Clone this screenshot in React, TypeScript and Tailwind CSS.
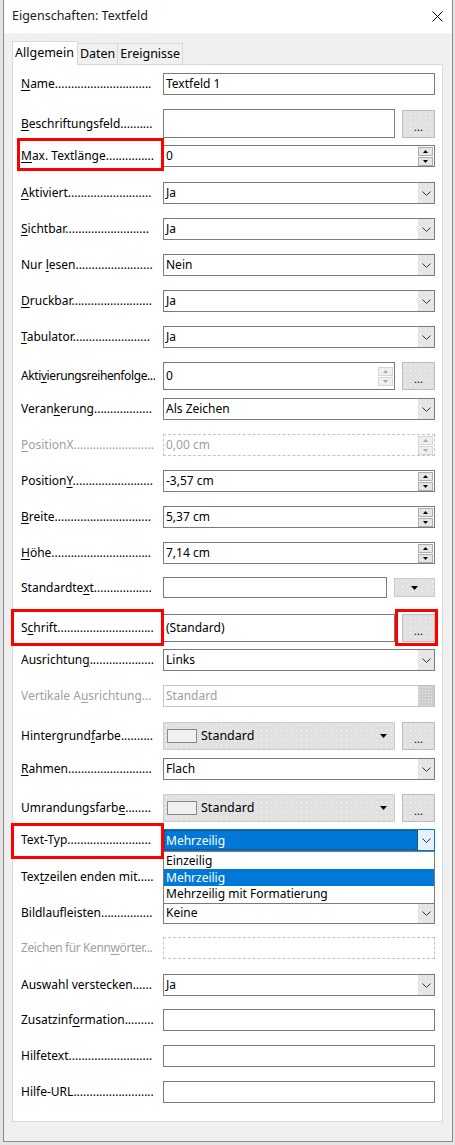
import React from "react";

type Kind =
    | "text"
    | "textBtn"
    | "spin"
    | "spinBtn"
    | "select"
    | "selectOff"
    | "spinOff"
    | "textDrop"
    | "font"
    | "color"
    | "focus"
    | "textOff";

type Row = {
    label: string;
    kind: Kind;
    value?: string;
    mt: string;
    off?: boolean;
    mark?: "max" | "schrift" | "typ";
};

const rows: Row[] = [
    { label: "_Name", kind: "text", value: "Textfeld 1", mt: "mt-0" },
    { label: "_Beschriftungsfeld", kind: "textBtn", mt: "mt-[14px]" },
    { label: "_Max. Textlänge", kind: "spin", value: "0", mt: "mt-[7px]", mark: "max" },
    { label: "_Aktiviert", kind: "select", value: "Ja", mt: "mt-[15px]" },
    { label: "_Sichtbar", kind: "select", value: "Ja", mt: "mt-[14px]" },
    { label: "Nur _lesen", kind: "select", value: "Nein", mt: "mt-[14px]" },
    { label: "_Druckbar", kind: "select", value: "Ja", mt: "mt-[14px]" },
    { label: "_Tabulator", kind: "select", value: "Ja", mt: "mt-[14px]" },
    { label: "Akti_vierungsreihenfolge", kind: "spinBtn", value: "0", mt: "mt-[14px]" },
    { label: "Veran_kerung", kind: "select", value: "Als Zeichen", mt: "mt-[8px]" },
    { label: "_PositionX", kind: "spinOff", value: "0,00 cm", mt: "mt-[14px]", off: true },
    { label: "Position_Y", kind: "spin", value: "-3,57 cm", mt: "mt-[14px]" },
    { label: "_Breite", kind: "spin", value: "5,37 cm", mt: "mt-[14px]" },
    { label: "_Höhe", kind: "spin", value: "7,14 cm", mt: "mt-[14px]" },
    { label: "Standardte_xt", kind: "textDrop", mt: "mt-[13px]" },
    { label: "S_chrift", kind: "font", value: "(Standard)", mt: "mt-[16px]", mark: "schrift" },
    { label: "Ausrichtun_g", kind: "select", value: "Links", mt: "mt-[7px]" },
    { label: "Vertikale A_usrichtung", kind: "selectOff", value: "Standard", mt: "mt-[14px]", off: true },
    { label: "Hintergrund_farbe", kind: "color", mt: "mt-[15px]" },
    { label: "_Rahmen", kind: "select", value: "Flach", mt: "mt-[8px]" },
    { label: "Umrandungsfarb_e", kind: "color", mt: "mt-[14px]" },
    { label: "Text-Typ", kind: "focus", value: "Mehrzeilig", mt: "mt-[7px]", mark: "typ" },
    { label: "Tex_tzeilen enden mit", kind: "select", value: "", mt: "mt-[15px]" },
    { label: "Bildlaufleisten", kind: "select", value: "Keine", mt: "mt-[14px]" },
    { label: "Zeichen für Kenn_wörter", kind: "textOff", mt: "mt-[13px]", off: true },
    { label: "Auswahl verstecken", kind: "select", value: "Ja", mt: "mt-[15px]" },
    { label: "Zusatzinf_ormation", kind: "text", mt: "mt-[13px]" },
    { label: "Hilfetext", kind: "text", mt: "mt-[14px]" },
    { label: "Hilfe-URL", kind: "text", mt: "mt-[14px]" },
];

// leader dots: how many fit after the label text in a 134px column
let ctx: CanvasRenderingContext2D | null = null;
const measure = (text: string) => {
    if (!ctx) {
        ctx = document.createElement("canvas").getContext("2d");
        if (ctx) ctx.font = "12px 'Noto Sans'";
    }
    if (!ctx) return { dots: "...", tight: false };
    const w = ctx.measureText(text).width;
    const dot = ctx.measureText(".").width || 3;
    const free = 133 - w;
    return {
        dots: ".".repeat(Math.max(3, Math.floor(free / dot))),
        tight: free < dot * 3,
    };
};

const Label = ({ text, off }: { text: string; off?: boolean }) => {
    const i = text.indexOf("_");
    const { dots, tight } = measure(text.replace("_", ""));
    const color = off ? "text-[#a0a0a0]" : "text-black";
    return (
        <div className={`w-[142px] shrink-0 ${color}`}>
            <div
                className={`w-[134px] overflow-hidden whitespace-nowrap ${tight ? "tracking-[-0.4px]" : ""}`}
            >
                {i < 0 ? (
                    text
                ) : (
                    <>
                        {text.slice(0, i)}
                        <span className="underline underline-offset-2">{text[i + 1]}</span>
                        {text.slice(i + 2)}
                    </>
                )}
                {dots}
            </div>
        </div>
    );
};

const Chevron = ({ color = "#333" }: { color?: string }) => (
    <svg width="9" height="5" viewBox="0 0 9 5">
        <polyline points="0.5,0.5 4.5,4.5 8.5,0.5" fill="none" stroke={color} strokeWidth="1" />
    </svg>
);

const Down = ({ w = 7, color = "#000" }: { w?: number; color?: string }) => (
    <svg width={w} height={Math.ceil(w / 2)} viewBox={`0 0 ${w} ${Math.ceil(w / 2)}`}>
        <polygon points={`0,0 ${w},0 ${w / 2},${Math.ceil(w / 2)}`} fill={color} />
    </svg>
);

const Up = ({ color = "#000" }: { color?: string }) => (
    <svg width="5" height="3" viewBox="0 0 5 3">
        <polygon points="0,3 5,3 2.5,0" fill={color} />
    </svg>
);

const dotted =
    "bg-[#e1e1e1] bg-[radial-gradient(circle,#f8f8f8_0.7px,transparent_0.9px)] bg-[length:5px_5px]";

const DotsButton = () => (
    <div
        className={`ml-[7px] flex h-[28px] w-[33px] shrink-0 items-end justify-center border border-[#bcbcbc] pb-[5px] text-[11px] leading-none ${dotted}`}
    >
        ...
    </div>
);

const Spin = ({ off }: { off?: boolean }) => {
    const box = off
        ? "border-[#d6d6d6] bg-[#f0f0f0]"
        : "border-[#adadad] bg-[#e5e5e5]";
    const c = off ? "#a8a8a8" : "#000";
    return (
        <div className="mr-px flex w-[15px] shrink-0 flex-col gap-px">
            <div className={`flex h-[9px] items-center justify-center border ${box}`}>
                <Up color={c} />
            </div>
            <div className={`flex h-[9px] items-center justify-center border ${box}`}>
                <Down w={5} color={c} />
            </div>
        </div>
    );
};

const SelectBtn = () => (
    <div className={`flex w-[16px] shrink-0 items-center justify-center ${dotted} bg-[#e5e5e5]`}>
        <Chevron />
    </div>
);

const Control = ({ row }: { row: Row }) => {
    const v = row.value ?? "";
    switch (row.kind) {
        case "text":
            return (
                <div className="flex h-[22px] flex-1 items-center border border-[#7a7a7a] bg-white pl-[2px]">
                    {v}
                </div>
            );
        case "textOff":
            return (
                <div className="flex h-[22px] flex-1 items-center border border-dashed border-[#c4c4c4] bg-white pl-[2px]" />
            );
        case "textBtn":
            return (
                <div className="flex flex-1 items-center">
                    <div className="h-[29px] flex-1 border border-[#7a7a7a] bg-white" />
                    <DotsButton />
                </div>
            );
        case "font":
            return (
                <div className="flex flex-1 items-center">
                    <div className="flex h-[28px] flex-1 items-center border border-[#7a7a7a] bg-white pl-[2px]">
                        {v}
                    </div>
                    <DotsButton />
                </div>
            );
        case "spin":
            return (
                <div className="flex h-[22px] flex-1 items-center border border-[#7a7a7a] bg-white pl-[2px]">
                    <span className="flex-1">{v}</span>
                    <Spin />
                </div>
            );
        case "spinOff":
            return (
                <div className="flex h-[22px] flex-1 items-center border border-dashed border-[#c4c4c4] bg-white pl-[2px] text-[#a0a0a0]">
                    <span className="flex-1">{v}</span>
                    <Spin off />
                </div>
            );
        case "spinBtn":
            return (
                <div className="flex flex-1 items-center">
                    <div className="flex h-[28px] flex-1 items-center border border-[#7a7a7a] bg-white pl-[2px]">
                        <span className="flex-1">{v}</span>
                        <Spin off />
                    </div>
                    <DotsButton />
                </div>
            );
        case "select":
            return (
                <div className="flex h-[22px] flex-1 border border-[#7a7a7a] bg-white">
                    <span className="flex-1 self-center pl-[2px]">{v}</span>
                    <SelectBtn />
                </div>
            );
        case "selectOff":
            return (
                <div className="flex h-[22px] flex-1 border border-[#c4c4c4] bg-white text-[#a0a0a0]">
                    <span className="flex-1 self-center pl-[2px]">{v}</span>
                    <div className="w-[16px] shrink-0 bg-[#cdcdcd] bg-[radial-gradient(circle,#eeeeee_0.7px,transparent_0.9px)] bg-[length:3px_3px]" />
                </div>
            );
        case "textDrop":
            return (
                <div className="flex flex-1 items-center">
                    <div className="h-[21px] w-[224px] border border-[#7a7a7a] bg-white" />
                    <div
                        className={`ml-[7px] flex h-[19px] flex-1 items-center justify-center border border-[#cccccc] ${dotted}`}
                    >
                        <Down w={7} />
                    </div>
                </div>
            );
        case "color":
            return (
                <div className="flex flex-1 items-center">
                    <div
                        className={`flex h-[28px] flex-1 items-center border border-[#cccccc] pl-[3px] ${dotted}`}
                    >
                        <div className="h-[14px] w-[30px] border border-[#8a8a8a] bg-[#f0f0f0]" />
                        <span className="ml-[4px] flex-1 text-[12.5px]">Standard</span>
                        <div className="mr-[7px]">
                            <Down w={7} />
                        </div>
                    </div>
                    <DotsButton />
                </div>
            );
        case "focus":
            return (
                <div className="relative flex h-[22px] flex-1 border border-[#0078d7] bg-white">
                    <span className="flex-1 self-stretch border border-dotted border-[#333] bg-[#0078d7] pl-px leading-[20px] text-white">
                        {v}
                    </span>
                    <div className="flex w-[16px] shrink-0 items-center justify-center bg-[#e5f1fb]">
                        <Chevron />
                    </div>
                    <div className="absolute left-[-1px] right-[-1px] top-[21px] z-20 border border-[#7a7a7a] bg-white">
                        <div className="h-[17px] pl-[2px] leading-[17px]">Einzeilig</div>
                        <div className="h-[17px] bg-[#0078d7] pl-[2px] leading-[17px] text-white">
                            Mehrzeilig
                        </div>
                        <div className="h-[17px] pl-[2px] leading-[16px]">Mehrzeilig mit Formatierung</div>
                    </div>
                </div>
            );
    }
};

const Mark = ({ mark }: { mark: Row["mark"] }) => {
    if (mark === "max")
        return (
            <div className="pointer-events-none absolute left-[4px] top-[-7px] z-30 h-[33px] w-[147px] border-[3px] border-[#ff0000]" />
        );
    if (mark === "schrift")
        return (
            <>
                <div className="pointer-events-none absolute left-[-2px] top-[-5px] z-30 h-[37px] w-[153px] border-[3px] border-[#ff0000]" />
                <div className="pointer-events-none absolute left-[382px] top-[-5px] z-30 h-[37px] w-[43px] border-[3px] border-[#ff0000]" />
            </>
        );
    if (mark === "typ")
        return (
            <div className="pointer-events-none absolute left-[-2px] top-[-6px] z-30 h-[36px] w-[153px] border-[3px] border-[#ff0000]" />
        );
    return null;
};

export default function App() {
    return (
        <div className="h-[1145px] w-[455px] overflow-hidden bg-[#e4e4e4] pl-[3px] font-['Noto_Sans',sans-serif] text-[12px] text-black">
            <div className="w-[450px] border-x border-b border-[#8a8a8a] bg-[#f0f0f0]">
                <div className="flex h-[33px] items-center justify-between bg-white pl-[8px] pr-[9px]">
                    <span className="text-[12.5px] text-[#1a1a1a]">Eigenschaften: Textfeld</span>
                    <svg width="11" height="11" viewBox="0 0 11 11">
                        <path d="M0.5 0.5 L10.5 10.5 M10.5 0.5 L0.5 10.5" stroke="#000" strokeWidth="1" />
                    </svg>
                </div>
                <div className="px-[8px] pb-[19px] pt-[8px]">
                    <div className="flex items-end text-[12.5px]">
                        <div className="relative z-10 -mb-px h-[24px] border border-b-0 border-[#d9d9d9] bg-white pl-[2px] pr-[3px] leading-[22px]">
                            Allgemein
                        </div>
                        <div className="h-[21px] border-t border-r border-[#d9d9d9] bg-[#f0f0f0] px-[2px] leading-[20px]">
                            Daten
                        </div>
                        <div className="h-[21px] border-t border-r border-[#d9d9d9] bg-[#f0f0f0] px-[2px] leading-[20px]">
                            Ereignisse
                        </div>
                    </div>
                    <div className="w-[431px] border border-[#d9d9d9] bg-white pb-[18px] pt-[8px]">
                        {rows.map((row) => (
                            <div
                                key={row.label}
                                className={`relative flex items-center pl-[8px] pr-[7px] ${row.mt}`}
                            >
                                <Label text={row.label} off={row.off} />
                                <Control row={row} />
                                <Mark mark={row.mark} />
                            </div>
                        ))}
                    </div>
                </div>
            </div>
        </div>
    );
}
